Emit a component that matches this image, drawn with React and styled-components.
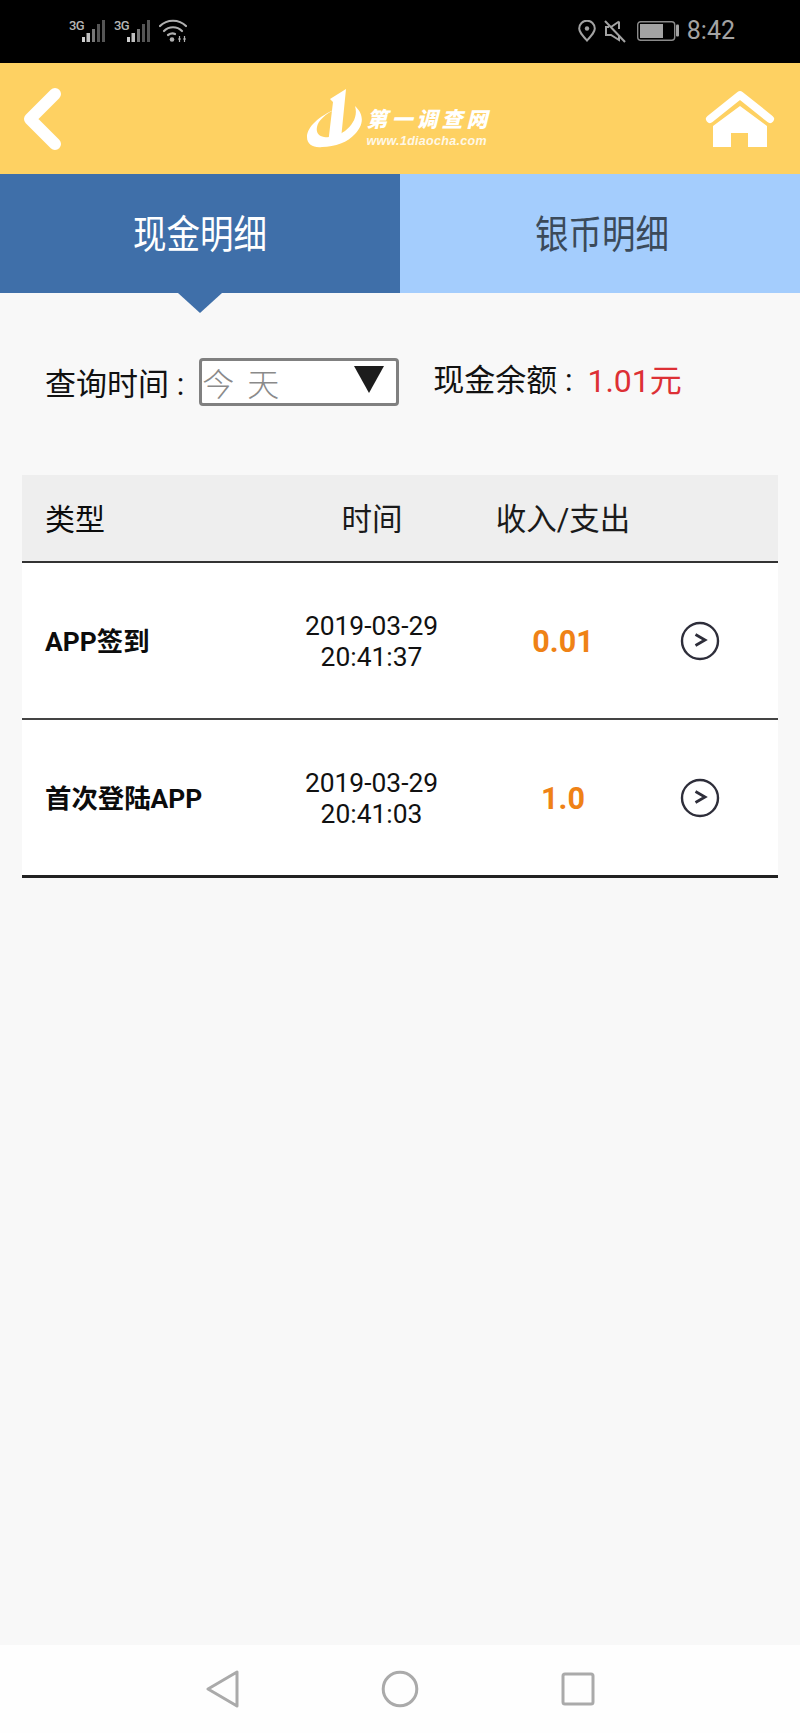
import styled, { createGlobalStyle } from "styled-components";

const GlobalStyle = createGlobalStyle`
  html, body {
    margin: 0;
    padding: 0;
    background: #f8f8f8;
  }
  * {
    box-sizing: border-box;
  }
`;

const cjk = `Roboto, "Noto Sans CJK SC", sans-serif`;

const Page = styled.div`
  width: 800px;
  height: 1733px;
  display: flex;
  flex-direction: column;
  background: #f8f8f8;
  font-family: ${cjk};
  color: #111;
  overflow: hidden;
`;

// status bar
const StatusBar = styled.div`
  height: 63px;
  flex: none;
  background: #000;
  display: flex;
  align-items: center;
  justify-content: space-between;
  padding: 0 65px 1px 69px;
  color: #a3a3a3;
`;
const StatusGroup = styled.div`
  display: flex;
  align-items: center;
  gap: ${(p) => p.$gap || 0}px;
`;
const Signal = styled.div`
  width: 37px;
  height: 26px;
  position: relative;
  margin-right: 8px;
`;
const SignalLabel = styled.span`
  position: absolute;
  left: 0;
  top: 1px;
  font: 500 13px/13px Roboto, sans-serif;
  color: #b5b5b5;
  letter-spacing: -0.6px;
`;
const Clock = styled.span`
  font: 400 25px/28px Roboto, sans-serif;
  color: #a3a3a3;
`;

// top yellow header
const Header = styled.div`
  height: 111px;
  flex: none;
  background: #fed162;
  display: flex;
  align-items: center;
  justify-content: space-between;
  padding: 0 25px 0 21px;
`;
const Logo = styled.div`
  display: flex;
  align-items: center;
  gap: 2px;
  margin-left: 30px;
  color: #fff;
`;
const LogoText = styled.div`
  display: flex;
  flex-direction: column;
  margin-top: 13px;
`;
const LogoName = styled.span`
  font: italic 900 21px/31px "Noto Sans CJK SC", sans-serif;
  letter-spacing: 4px;
  color: #fff;
`;
const LogoUrl = styled.span`
  font: italic 700 12.500px/14px "Liberation Sans", sans-serif;
  letter-spacing: 0.3px;
  color: #fff;
  opacity: 0.85;
`;

// tabs
const Tabs = styled.div`
  height: 119px;
  flex: none;
  display: flex;
`;
const Tab = styled.div`
  width: 50%;
  position: relative;
  display: flex;
  align-items: center;
  justify-content: center;
  padding-bottom: 3px;
  padding-left: ${(p) => (p.$active ? 0 : 4)}px;
  background: ${(p) => (p.$active ? "#3f6fa9" : "#a4cdfd")};
  color: ${(p) => (p.$active ? "#fff" : "#3b4a5a")};
  &::after {
    content: "";
    display: ${(p) => (p.$active ? "block" : "none")};
    position: absolute;
    left: 178px;
    top: 100%;
    border-left: 22px solid transparent;
    border-right: 22px solid transparent;
    border-top: 20px solid #3f6fa9;
  }
`;
const TabLabel = styled.span`
  font: 400 33.500px/48px "Noto Sans CJK SC", sans-serif;
  transform: scaleY(1.16);
`;

// filter row
const FilterRow = styled.div`
  display: flex;
  align-items: flex-start;
  padding: 65px 0 0 45px;
  height: 182px;
  flex: none;
`;
const Label = styled.span`
  font: 400 31px/44px ${cjk};
  color: #111;
  white-space: nowrap;
  padding-top: ${(p) => p.$top || 0}px;
`;
const Select = styled.div`
  width: 200px;
  height: 48px;
  margin-left: 15px;
  border: 3px solid #808080;
  border-radius: 4px;
  background: #fff;
  display: flex;
  align-items: center;
  justify-content: space-between;
  padding: 0 12px 0 0;
  font: 300 32px/42px "Noto Sans CJK SC", sans-serif;
  color: #8a8a8a;
  letter-spacing: 3px;
`;
const SelectArrow = styled.i`
  display: block;
  margin-bottom: 5px;
  border-left: 15px solid transparent;
  border-right: 15px solid transparent;
  border-top: 27px solid #1c1c1c;
`;
const Balance = styled.div`
  margin-left: 34px;
  margin-top: 1px;
  display: flex;
`;
const BalanceValue = styled.span`
  margin-left: 15px;
  font: 400 32px/44px ${cjk};
  color: #dd3035;
`;

// table
const Table = styled.div`
  width: 756px;
  margin-left: 22px;
  background: #fff;
  flex: none;
`;
const gridCols = "250px 200px 182px 1fr";
const HeadRow = styled.div`
  display: grid;
  grid-template-columns: ${gridCols};
  align-items: center;
  height: 88px;
  padding-top: 4px;
  background: #eeeeee;
  border-bottom: 2px solid #333;
  font: 400 30.500px/40px ${cjk};
  color: #1a1a1a;
`;
const Row = styled.div`
  display: grid;
  grid-template-columns: ${gridCols};
  align-items: center;
  height: ${(p) => (p.$last ? 158 : 157)}px;
  border-bottom: ${(p) => (p.$last ? 3 : 2)}px solid ${(p) => (p.$last ? "#222" : "#444")};
`;
const TypeCell = styled.div`
  padding-left: 23px;
  font-size: ${(p) => p.$size || 30}px;
  font-weight: ${(p) => (p.$bold ? 700 : 400)};
  color: #0c0c0c;
  white-space: nowrap;
  margin-top: ${(p) => (p.$bold ? -2 : 0)}px;
`;
const CenterCell = styled.div`
  text-align: center;
`;
const DateCell = styled.div`
  text-align: center;
  font: 400 26.400px/31px Roboto, sans-serif;
  color: #111;
  margin-top: 2px;
  margin-left: -1px;
`;
const Amount = styled.div`
  text-align: center;
  font: 700 30.500px/36px Roboto, sans-serif;
  color: #ef8216;
  margin-top: 2px;
`;
const IconCell = styled.div`
  display: flex;
  justify-content: center;
  padding-right: 32px;
  margin-top: 1px;
`;

const Spacer = styled.div`
  flex: 1;
`;

// android nav bar
const NavBar = styled.div`
  height: 88px;
  flex: none;
  background: #fefefe;
  display: flex;
  align-items: center;
  justify-content: center;
  gap: 142px;
`;

const BackIcon = () => (
  <svg width="42" height="64" viewBox="0 0 42 64">
    <path d="M34 7 L9 32 L34 57" fill="none" stroke="#fff" strokeWidth="12" strokeLinecap="round" strokeLinejoin="round" />
  </svg>
);

const HomeIcon = () => (
  <svg width="70" height="57" viewBox="0 0 70 57">
    <path d="M5 29 L35 5 L65 29" fill="none" stroke="#fff" strokeWidth="8" strokeLinecap="round" strokeLinejoin="round" />
    <path d="M35 16 L62 36 V57 H43 V43 H26 V57 H8 V36 Z" fill="#fff" />
  </svg>
);

const LogoMark = () => (
  <svg width="58" height="60" viewBox="0 0 58 60">
    <path d="M29 20 C12 27 0 38 0 48 C0 56 7 59 15 58 C28 58 41 53 48 45 C55 38 59 27 48 17 C51 27 46 36 38 42 C31 47 23 49 17 48 C11 47 9 43 10 38 C11 32 18 25 29 20 Z" fill="#fff" />
    <path d="M39 0 L23 10 L26 13 L21 55 L34 50 Z" fill="#fff" />
  </svg>
);

const SignalBars = () => (
  <svg width="37" height="26" viewBox="0 0 37 26">
    <rect x="13" y="19" width="3" height="5" fill="#d0d0d0" />
    <rect x="17.500" y="15" width="3.500" height="9" fill="#c0c0c0" />
    <rect x="23" y="11" width="3" height="13" fill="#777" />
    <rect x="28" y="6" width="3" height="18" fill="#555" />
    <rect x="33" y="2" width="3" height="22" fill="#555" />
  </svg>
);

const Wifi = () => (
  <svg width="28" height="24" viewBox="0 0 28 24">
    <g fill="none" stroke="#b0b0b0" strokeWidth="2.2" strokeLinecap="round">
      <path d="M1 7 C8 0 20 0 27 7" />
      <path d="M5 12 C10 7 18 7 23 12" />
      <path d="M9 16 C12 14 14 14 16 15" />
    </g>
    <circle cx="13" cy="20.500" r="2.300" fill="#b0b0b0" />
    <path d="M19 20 h3 M20.500 17 v6 M24 20 h3 M25.500 17 v6" stroke="#b0b0b0" strokeWidth="1.200" />
  </svg>
);

const Pin = () => (
  <svg width="18" height="22" viewBox="0 0 18 22">
    <path d="M9 20.500 C4 15 1.200 12 1.200 8.500 A7.800 7.800 0 0 1 16.800 8.500 C16.800 12 14 15 9 20.500 Z" fill="none" stroke="#a3a3a3" strokeWidth="2" />
    <circle cx="9" cy="8.500" r="2.200" fill="#a3a3a3" />
  </svg>
);

const Muted = () => (
  <svg width="22" height="23" viewBox="0 0 22 23">
    <path d="M15 1.500 V9 M15 15 V20 L7 15 H2 V7 H5 M7 7 L15 1.500" fill="none" stroke="#a3a3a3" strokeWidth="2" />
    <path d="M1 1 L21 22" stroke="#a3a3a3" strokeWidth="2" />
  </svg>
);

const Battery = () => (
  <svg width="45" height="20" viewBox="0 0 45 20">
    <rect x="3.700" y="0.700" width="37" height="18.600" rx="3" fill="none" stroke="#8a8a8a" strokeWidth="1.400" />
    <rect x="6" y="3" width="23" height="14" fill="#a3a3a3" />
    <rect x="42" y="3.500" width="3" height="12" rx="1" fill="#a3a3a3" />
  </svg>
);

const ArrowCircle = () => (
  <svg width="40" height="40" viewBox="0 0 40 40">
    <circle cx="20" cy="20" r="18" fill="none" stroke="#2e2e3a" strokeWidth="2.400" />
    <path d="M15.500 13.500 L25 19 L15.500 24.500" fill="none" stroke="#2e2e3a" strokeWidth="2.800" />
  </svg>
);

const rows = [
  { type: "APP签到", date: "2019-03-29", time: "20:41:37", amount: "0.01" },
  { type: "首次登陆APP", date: "2019-03-29", time: "20:41:03", amount: "1.0", last: true },
];

export default function App() {
  return (
    <Page>
      <GlobalStyle />
      <StatusBar>
        <StatusGroup>
          <Signal>
            <SignalLabel>3G</SignalLabel>
            <SignalBars />
          </Signal>
          <Signal>
            <SignalLabel>3G</SignalLabel>
            <SignalBars />
          </Signal>
          <Wifi />
        </StatusGroup>
        <StatusGroup $gap={8}>
          <Pin />
          <Muted />
          <Battery />
          <Clock>8:42</Clock>
        </StatusGroup>
      </StatusBar>
      <Header>
        <BackIcon />
        <Logo>
          <LogoMark />
          <LogoText>
            <LogoName>第一调查网</LogoName>
            <LogoUrl>www.1diaocha.com</LogoUrl>
          </LogoText>
        </Logo>
        <HomeIcon />
      </Header>
      <Tabs>
        <Tab $active>
          <TabLabel>现金明细</TabLabel>
        </Tab>
        <Tab>
          <TabLabel>银币明细</TabLabel>
        </Tab>
      </Tabs>
      <FilterRow>
        <Label $top={5}>查询时间 :</Label>
        <Select>
          今 天
          <SelectArrow />
        </Select>
        <Balance>
          <Label>现金余额 :</Label>
          <BalanceValue>1.01元</BalanceValue>
        </Balance>
      </FilterRow>
      <Table>
        <HeadRow>
          <TypeCell>类型</TypeCell>
          <CenterCell>时间</CenterCell>
          <CenterCell>收入/支出</CenterCell>
        </HeadRow>
        {rows.map((r) => (
          <Row key={r.type} $last={r.last}>
            <TypeCell $bold $size={26.4}>{r.type}</TypeCell>
            <DateCell>
              {r.date}
              <br />
              {r.time}
            </DateCell>
            <Amount>{r.amount}</Amount>
            <IconCell>
              <ArrowCircle />
            </IconCell>
          </Row>
        ))}
      </Table>
      <Spacer />
      <NavBar>
        <svg width="34" height="38" viewBox="0 0 34 38">
          <path d="M32 2 V36 L3 19 Z" fill="none" stroke="#aaa" strokeWidth="3" strokeLinejoin="round" />
        </svg>
        <svg width="38" height="38" viewBox="0 0 38 38">
          <circle cx="19" cy="19" r="16.800" fill="none" stroke="#aaa" strokeWidth="3" />
        </svg>
        <svg width="34" height="34" viewBox="0 0 34 34">
          <rect x="2" y="2" width="30" height="30" rx="2" fill="none" stroke="#aaa" strokeWidth="3" />
        </svg>
      </NavBar>
    </Page>
  );
}
